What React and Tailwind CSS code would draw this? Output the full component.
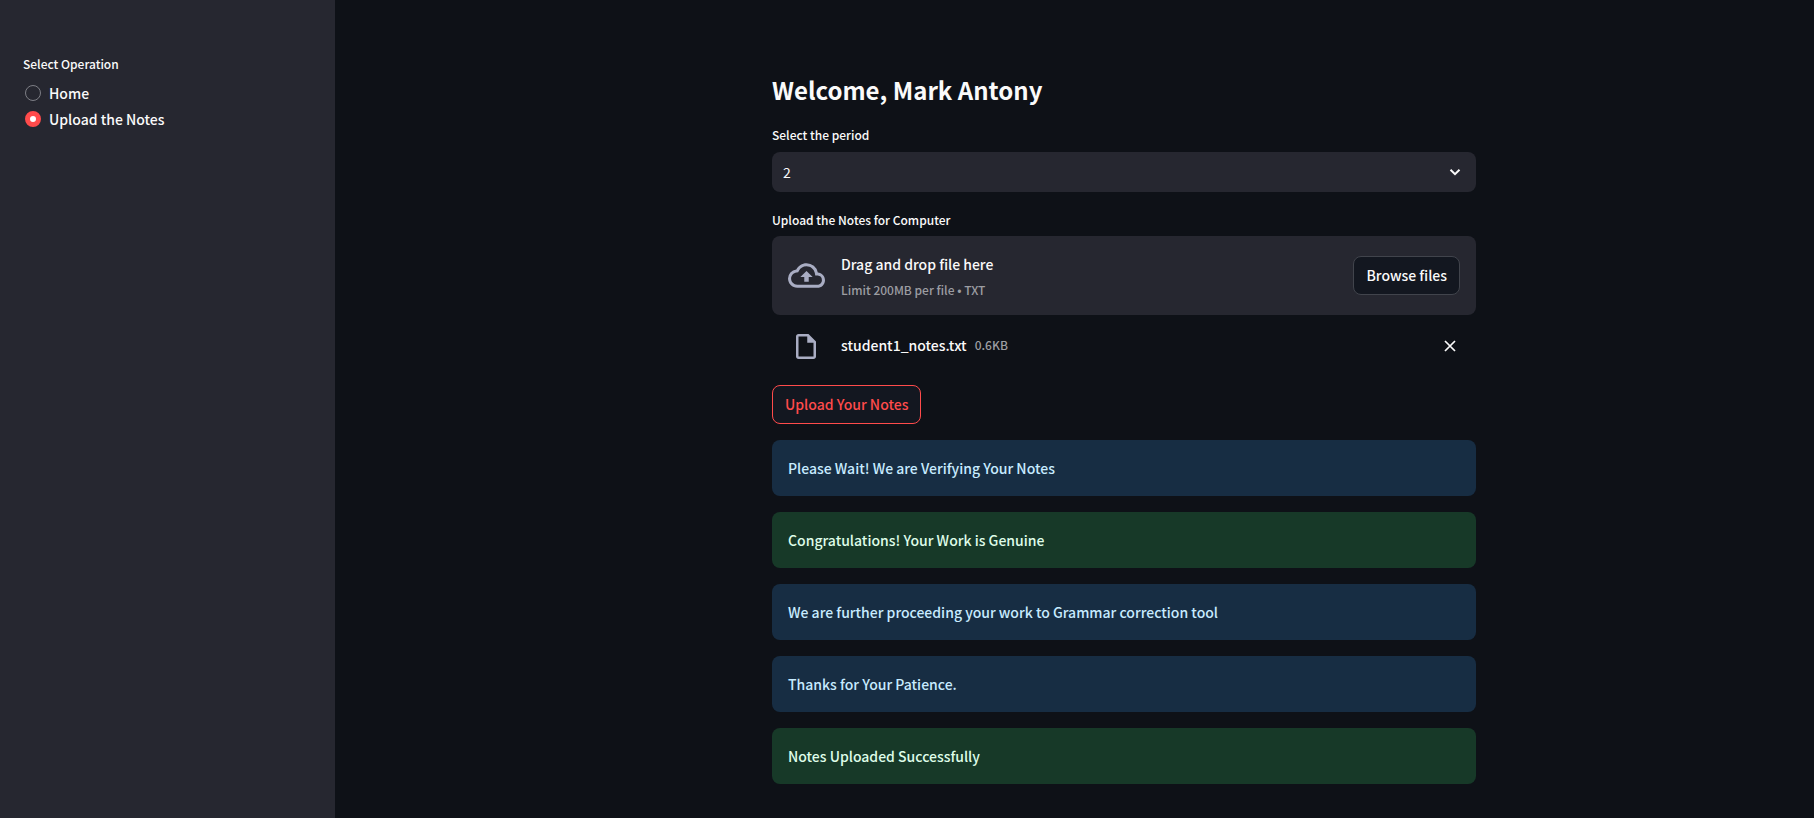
import { useState } from "react";

const operations = ["Home", "Upload the Notes"];

const alerts = [
  { kind: "info", text: "Please Wait! We are Verifying Your Notes" },
  { kind: "success", text: "Congratulations! Your Work is Genuine" },
  { kind: "info", text: "We are further proceeding your work to Grammar correction tool" },
  { kind: "info", text: "Thanks for Your Patience." },
  { kind: "success", text: "Notes Uploaded Successfully" },
];

const alertStyles = {
  info: "bg-[#172d43] text-[#c7ebff]",
  success: "bg-[#173928] text-[#dffde9]",
};

function Sidebar() {
  const [selected, setSelected] = useState("Upload the Notes");
  return (
    <aside className="w-[335px] shrink-0 bg-[#262730] px-[23px] pt-[54px]">
      <fieldset>
        <legend className="mb-[7px] text-xs leading-5">Select Operation</legend>
        <div className="flex flex-col gap-0.5">
          {operations.map((name) => (
            <label key={name} className="flex items-center gap-2 leading-6">
              <input
                type="radio"
                name="operation"
                checked={selected === name}
                onChange={() => setSelected(name)}
                className="ml-0.5 size-4 appearance-none rounded-full border border-[#7d7e85] checked:border-[5px] checked:border-[#ff4b4b] checked:bg-white"
              />
              {name}
            </label>
          ))}
        </div>
      </fieldset>
    </aside>
  );
}

function PeriodSelect() {
  return (
    <div>
      <label htmlFor="period" className="mb-[7px] block text-xs leading-5">
        Select the period
      </label>
      <div className="relative">
        <select
          id="period"
          defaultValue="2"
          className="block h-10 w-full appearance-none rounded-lg bg-[#262730] px-[11px] font-normal"
        >
          {["1", "2", "3", "4", "5", "6"].map((period) => (
            <option key={period}>{period}</option>
          ))}
        </select>
        <svg
          viewBox="0 0 12 12"
          className="pointer-events-none absolute top-3.5 right-[15px] size-3 stroke-[#fafafa]"
          aria-hidden="true"
        >
          <path d="M1.500 3.800 6 8.200l4.500-4.400" strokeWidth="2" fill="none" />
        </svg>
      </div>
    </div>
  );
}

function Uploader() {
  return (
    <section className="pt-0.5">
      <h2 className="mb-1.5 text-xs leading-5 font-medium">Upload the Notes for Computer</h2>
      <div className="flex items-center rounded-lg bg-[#262730] px-4 py-[13px]">
        <svg viewBox="0 0 24 24" className="mr-4 size-[37px] fill-[#a9adc3]" aria-hidden="true">
          <path d="M19.350 10.040A7.490 7.490 0 0 0 12 4C9.110 4 6.600 5.640 5.350 8.040A5.994 5.994 0 0 0 0 14c0 3.310 2.690 6 6 6h13c2.760 0 5-2.240 5-5 0-2.640-2.050-4.780-4.650-4.960zM19 18H6c-2.210 0-4-1.790-4-4 0-2.050 1.530-3.760 3.560-3.970l1.070-.110.500-.950A5.469 5.469 0 0 1 12 6c2.620 0 4.880 1.860 5.390 4.430l.300 1.500 1.530.110A2.980 2.980 0 0 1 22 15c0 1.650-1.350 3-3 3zM8 13h2.550v3h2.900v-3H16l-4-4z" />
        </svg>
        <div className="mr-auto pt-0.5">
          <p className="leading-[26px]">Drag and drop file here</p>
          <p className="text-xs leading-[25px] text-[#9c9da2]">Limit 200MB per file • TXT</p>
        </div>
        <button
          type="button"
          className="rounded-lg border border-[#41444c] bg-[#131720] px-3 py-[7px] leading-[23px]"
        >
          Browse files
        </button>
      </div>
      <div className="flex items-center px-4 pt-4 pb-2">
        <span className="mr-[17px] flex w-9 justify-center">
          <svg viewBox="4 2 16 20" className="h-[25px] w-5 fill-[#a9adc3]" aria-hidden="true">
            <path d="M14 2H6c-1.100 0-1.990.900-1.990 2L4 20c0 1.100.890 2 1.990 2H18c1.100 0 2-.900 2-2V8l-6-6zM6 20V4h7v5h5v11H6z" />
          </svg>
        </span>
        <div className="mr-auto flex items-center gap-2 pb-0.5 leading-7">
          <span>student1_notes.txt</span>
          <span className="text-xs leading-7 text-[#9c9da2]">0.6KB</span>
        </div>
        <button type="button" aria-label="Remove file" className="p-1">
          <svg viewBox="0 0 12 12" className="size-3 stroke-[#fafafa]" aria-hidden="true">
            <path d="m1 1 10 10M11 1 1 11" strokeWidth="1.700" fill="none" />
          </svg>
        </button>
      </div>
    </section>
  );
}

export default function App() {
  return (
    <div className="flex min-h-screen bg-[#0e1117] font-['Noto_Sans_CJK_JP',sans-serif] text-sm font-medium text-[#fafafa]">
      <Sidebar />
      <main className="min-w-0 grow pt-[72px] pr-4 pb-8 pl-[115px]">
        <div className="mx-auto flex max-w-[704px] flex-col gap-4">
          <h1 className="mb-px text-2xl leading-9 font-bold">Welcome, Mark Antony</h1>
          <PeriodSelect />
          <Uploader />
          <div>
            <button
              type="button"
              className="rounded-lg border border-[#ff4b4b] bg-[#131720] px-3 py-[7px] leading-[23px] text-[#ff4b4b]"
            >
              Upload Your Notes
            </button>
          </div>
          {alerts.map(({ kind, text }) => (
            <p key={text} role="status" className={`rounded-lg p-4 leading-6 ${alertStyles[kind]}`}>
              {text}
            </p>
          ))}
        </div>
      </main>
    </div>
  );
}
